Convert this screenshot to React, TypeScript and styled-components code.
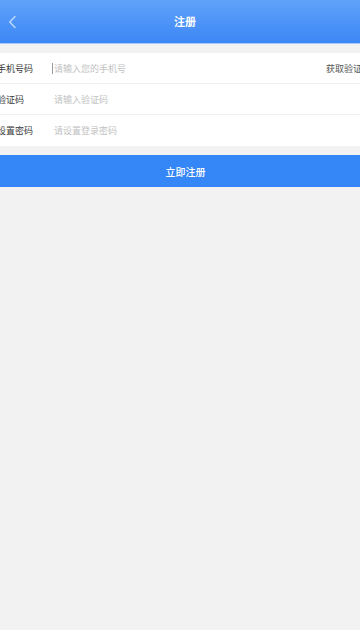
import React from "react";
import styled, { createGlobalStyle } from "styled-components";

const FONT = `"Noto Sans CJK SC", "Noto Sans", sans-serif`;

const GlobalStyle = createGlobalStyle`
    html, body {
        margin: 0;
        padding: 0;
        background-color: #f2f2f2;
        font-family: ${FONT};
        overflow-x: hidden;
    }
    * {
        box-sizing: border-box;
    }
`

interface Field {
    label: string,
    placeholder: string,
    type: string,
    caret?: boolean,
    action?: string
}

const FIELDS: Field[] = [
    { label: "手机号码", placeholder: "请输入您的手机号", type: "tel", caret: true, action: "获取验证码" },
    { label: "验证码", placeholder: "请输入验证码", type: "text" },
    { label: "设置密码", placeholder: "请设置登录密码", type: "password" },
];

const App: React.FC = () => {
    return (
        <>
            <GlobalStyle />
            <Page>
                <Header>
                    <BackButton aria-label="返回">
                        <svg width="10" height="14" viewBox="0 0 10 14">
                            <polyline points="7,1.5 1.8,7 7,12.5" fill="none" stroke="#b9d5fd" strokeWidth="1.6" strokeLinecap="round" strokeLinejoin="round" />
                        </svg>
                    </BackButton>
                    <Title>注册</Title>
                </Header>
                <Form>
                    {FIELDS.map((f, i) => (
                        <Row key={f.label} last={i === FIELDS.length - 1}>
                            <Label>{f.label}</Label>
                            {f.caret ? <Caret /> : <CaretGap />}
                            <Input type={f.type} placeholder={f.placeholder} />
                            {f.action ? <CodeLink>{f.action}</CodeLink> : null}
                        </Row>
                    ))}
                </Form>
                <SubmitButton>立即注册</SubmitButton>
            </Page>
        </>
    )
}

const Page = styled.div`
    min-height: 630px;
    width: 360px;
    background-color: #f2f2f2;
    overflow: hidden;
`

const Header = styled.div`
    display: flex;
    align-items: center;
    justify-content: center;
    position: relative;
    height: 44px;
    background: linear-gradient(180deg, #5fa2fa 0%, #3d87f6 100%);
    border-bottom: 1px solid #a7c9fb;
`

const BackButton = styled.button`
    position: absolute;
    left: 8px;
    top: 15px;
    display: flex;
    padding: 0;
    border: none;
    background: none;
    cursor: pointer;
`

const Title = styled.h1`
    margin: 0;
    padding-left: 10px;
    color: #ffffff;
    font-size: 11px;
    font-weight: bold;
    line-height: 1;
`

const Form = styled.div`
    display: flex;
    flex-direction: column;
    margin-top: 9px;
    background-color: #ffffff;
`

const Row = styled.div<{ last?: boolean }>`
    display: flex;
    align-items: center;
    height: 31px;
    border-bottom: ${props => props.last ? "none" : "1px solid #f0f0f0"};
`

const Label = styled.span`
    flex: 0 0 55px;
    margin-left: -3px;
    color: #3a3a3a;
    font-size: 9px;
    white-space: nowrap;
`

const Caret = styled.span`
    flex: 0 0 1px;
    height: 11px;
    margin-right: 1px;
    background-color: #9a9a9a;
`

const CaretGap = styled.span`
    flex: 0 0 2px;
`

const Input = styled.input`
    flex: 1;
    min-width: 0;
    height: 20px;
    padding: 0;
    border: none;
    outline: none;
    background: transparent;
    color: #333333;
    font-family: ${FONT};
    font-size: 9px;
    &::placeholder {
        color: #c2c2c2;
    }
`

const CodeLink = styled.span`
    flex: none;
    margin-right: -11px;
    color: #555555;
    font-size: 9px;
    white-space: nowrap;
    cursor: pointer;
`

const SubmitButton = styled.button`
    display: block;
    width: 100%;
    height: 32px;
    margin-top: 9px;
    padding: 0 0 0 11px;
    border: none;
    background-color: #3586f6;
    color: #ffffff;
    font-family: ${FONT};
    font-size: 10px;
    font-weight: 500;
    cursor: pointer;
`

export default App;
